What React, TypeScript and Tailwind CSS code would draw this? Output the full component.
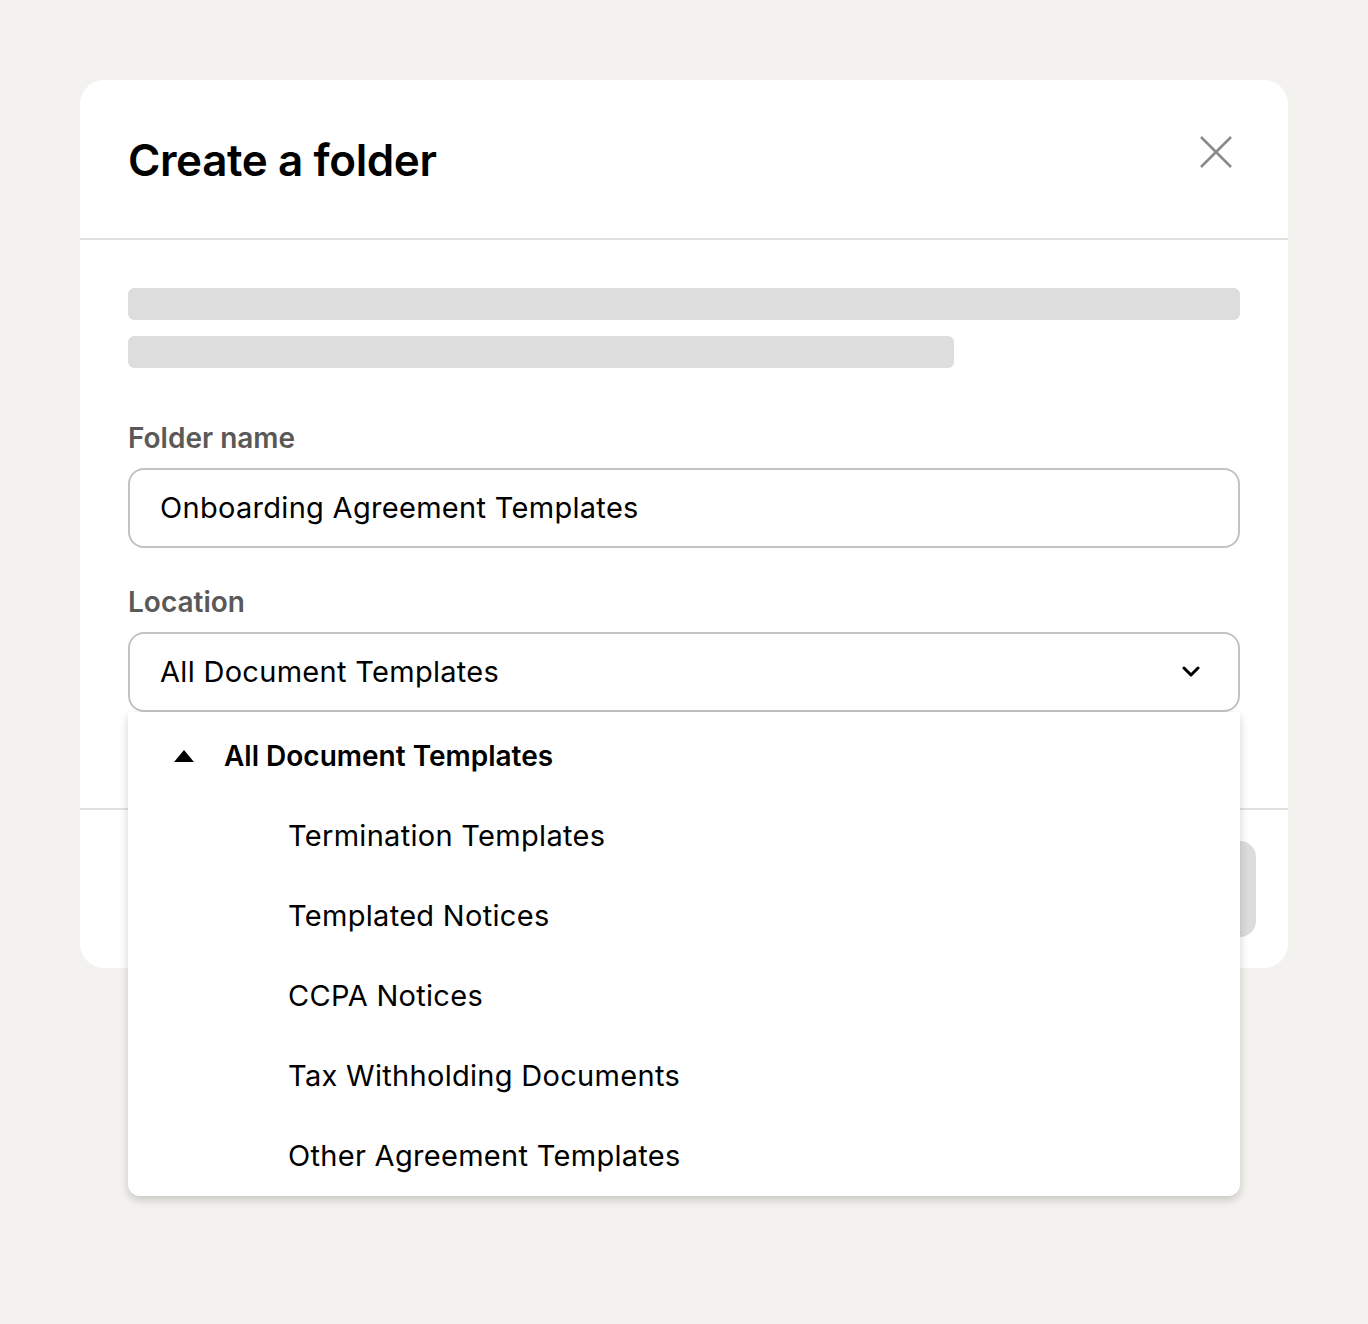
import React from 'react';

const children = [
  'Termination Templates',
  'Templated Notices',
  'CCPA Notices',
  'Tax Withholding Documents',
  'Other Agreement Templates',
];

export default function App() {
  return (
    <div
      className="min-h-[1324px] w-full bg-[#f3f2ee] px-[80px] pt-[80px] text-black"
      style={{ fontFamily: 'Inter, "Liberation Sans", sans-serif' }}
    >
      <div className="w-[1208px] rounded-[24px] bg-white">
        {/* Header */}
        <div className="flex h-[160px] items-start justify-between border-b-2 border-[#e2e1e0] pl-[48px] pr-[56px] pt-[52px]">
          <h1 className="text-[44px] font-semibold leading-[56px] tracking-[-0.4px]">Create a folder</h1>
          <button className="mt-[4px] text-[#8a8a8a]">
            <svg width="32" height="32" viewBox="0 0 32 32" fill="none" stroke="currentColor" strokeWidth="2.6">
              <path d="M1 1L31 31M31 1L1 31" />
            </svg>
          </button>
        </div>

        {/* Body */}
        <div className="px-[48px] pb-[96px] pt-[48px]">
          <div className="flex flex-col gap-[16px]">
            <div className="h-[32px] w-full rounded-[6px] bg-[#dfdede]" />
            <div className="h-[32px] w-[826px] rounded-[6px] bg-[#dfdede]" />
          </div>

          <div className="mt-[54px] text-[28px] font-semibold leading-[32px] text-[#5b5958]">Folder name</div>
          <div className="mt-[14px] flex h-[80px] items-center rounded-[16px] border-2 border-[#c4c3c2] px-[30px] text-[29px] tracking-[0.3px]">
            Onboarding Agreement Templates
          </div>

          <div className="mt-[38px] text-[28px] font-semibold leading-[32px] text-[#5b5958]">Location</div>
          <div className="relative mt-[14px]">
            <div className="flex h-[80px] items-center justify-between rounded-[16px] border-2 border-[#c4c3c2] pl-[30px] pr-[38px] text-[29px] tracking-[0.3px]">
              <span>All Document Templates</span>
              <svg width="18" height="12" viewBox="0 0 18 12" fill="none" stroke="black" strokeWidth="3" strokeLinecap="round" strokeLinejoin="round">
                <path d="M2 2L9 9L16 2" />
              </svg>
            </div>

            {/* Dropdown menu */}
            <div className="absolute left-0 right-0 top-[80px] z-10 rounded-b-[12px] bg-white pt-[4px] shadow-[0_4px_10px_rgba(0,0,0,0.18)]">
              <div className="flex h-[80px] items-center pl-[46px] text-[28px] font-semibold">
                <svg width="20" height="12" viewBox="0 0 20 12" className="mr-[30px]">
                  <path d="M10 0L20 12H0Z" fill="black" />
                </svg>
                All Document Templates
              </div>
              {children.map((c) => (
                <div key={c} className="flex h-[80px] items-center pl-[160px] text-[29px] tracking-[0.3px]">
                  {c}
                </div>
              ))}
            </div>
          </div>
        </div>

        {/* Footer */}
        <div className="flex h-[160px] items-center justify-end border-t-2 border-[#e2e1e0] pr-[32px]">
          <div className="h-[96px] w-[240px] rounded-[16px] bg-[#dddcdc]" />
        </div>
      </div>
    </div>
  );
}
